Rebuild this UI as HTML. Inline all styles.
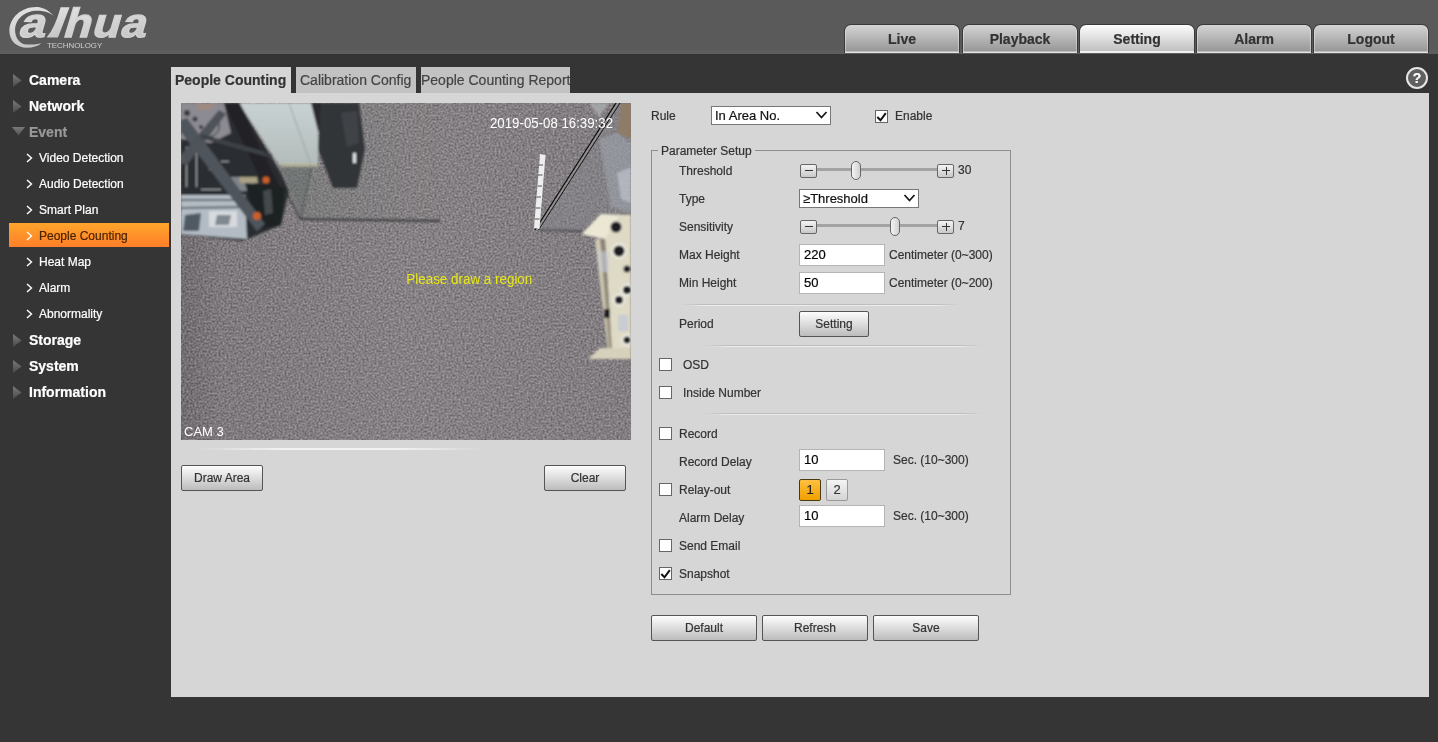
<!DOCTYPE html>
<html><head><meta charset="utf-8">
<style>
*{margin:0;padding:0;box-sizing:border-box}
div{-webkit-text-stroke-width:0.2px}
html,body{width:1438px;height:742px;overflow:hidden;background:#353535;font-family:"Liberation Sans",sans-serif;color:#333}
.a{position:absolute;white-space:nowrap}
#hdr{position:absolute;left:0;top:0;width:1438px;height:54px;background:#5a5a5a}
#hdr .strip{position:absolute;left:0;top:50px;width:1438px;height:4px;background:#5e5e5e}
.nav{position:absolute;top:24px;height:29px;width:116px;border:1px solid #3a3a3a;border-bottom:none;border-radius:7px 7px 0 0;background:linear-gradient(#d4d4d4,#939393);font-weight:bold;font-size:14px;color:#333;text-align:center;line-height:29px;box-shadow:inset 0 -1.5px 0 #e2e2e2,inset 1px 0 0 rgba(255,255,255,.35),inset -1px 0 0 rgba(255,255,255,.35)}
.nav.on{background:linear-gradient(#fdfdfd,#bcbcbc);box-shadow:inset 0 -2px 0 #f0f0f0}
.side1{position:absolute;left:29px;font-size:14px;font-weight:bold;color:#fff;line-height:16px}
.tri{position:absolute;left:12px;width:11px;height:15px}
.tridn{position:absolute;left:11px;width:15px;height:11px}
.side2{position:absolute;left:39px;font-size:12px;color:#fff;line-height:14px}
.chev{position:absolute;left:26px;width:7px;height:10px}
#panel{position:absolute;left:171px;top:93px;width:1258px;height:604px;background:#d6d6d6}
.ctab{position:absolute;white-space:nowrap;top:67px;height:26px;font-size:14px;line-height:16px;padding-top:5px;color:#444;background:#c2c2c2;overflow:hidden}
.ctab.on{background:#d6d6d6;font-weight:bold;color:#333}
.lbl{position:absolute;font-size:12px;color:#333;line-height:14px;white-space:nowrap}
.inp{position:absolute;left:799px;width:86px;height:22px;background:#fff;border:1px solid #b5b5b5;font-size:13px;color:#000;line-height:15px;padding:2px 0 0 4px}
.sel{position:absolute;height:19px;background:#fff;border:1px solid #777;font-size:13px;color:#111;line-height:15px;padding:1px 0 0 3px}
.btn{position:absolute;height:26px;border:1px solid #555;border-radius:2px;background:linear-gradient(#fdfdfd,#bcbcbc);font-size:12px;color:#333;text-align:center;line-height:25px}
.cb{position:absolute;left:659px;width:13px;height:13px;background:#fff;border:1px solid #666}
.sep{position:absolute;height:2px;background:linear-gradient(90deg,rgba(190,190,190,0),#bdbdbd 8%,#bdbdbd 92%,rgba(190,190,190,0))}
.sep:after{content:"";position:absolute;left:0;top:1px;width:100%;height:1px;background:linear-gradient(90deg,rgba(240,240,240,0),#ececec 8%,#ececec 92%,rgba(240,240,240,0))}
.sb{position:absolute;width:17px;height:14px;border:1px solid #666;border-radius:2px;background:linear-gradient(#f4f4f4,#c8c8c8)}
.mi{position:absolute;left:4px;top:5px;width:8px;height:1px;background:#333}
.pl{position:absolute;left:7.5px;top:1.5px;width:1px;height:8px;background:#333}
.track{position:absolute;height:3px;background:#a3a3a3}
.thumb{position:absolute;width:10px;height:19px;border:1px solid #666;border-radius:5px;background:linear-gradient(90deg,#f4f4f4,#d0d0d0)}
</style></head><body><div id="root" style="position:absolute;left:0;top:0;width:1438px;height:742px;will-change:transform">
<svg width="0" height="0" style="position:absolute"><defs><linearGradient id="tg" x1="0" y1="0" x2="0" y2="1"><stop offset="0" stop-color="#7a7a7a"/><stop offset="1" stop-color="#4a4a4a"/></linearGradient><linearGradient id="tg2" x1="0" y1="0" x2="0" y2="1"><stop offset="0" stop-color="#7a7a7a"/><stop offset="1" stop-color="#505050"/></linearGradient></defs></svg>
<div id="hdr"><div class="strip"></div></div>

<!-- logo -->
<svg class="a" style="left:0;top:0;will-change:transform" width="170" height="54" viewBox="0 0 170 54">
<defs><linearGradient id="lg" x1="0" y1="0" x2="0.3" y2="1"><stop offset="0" stop-color="#e6e6e6"/><stop offset="1" stop-color="#c6c6c6"/></linearGradient></defs>
<g fill="url(#lg)">
<path d="M54.2,16.2 C48,9.5 42,7 36,7 C21,7 9.4,18 9.4,31 C9.4,41 17,47.8 27,47.8 C33,47.8 38,46 41.4,43.2 C36,44.6 31,44.6 27,44.6 C20,44.6 15.1,38 15.1,30.3 C15.1,19 25,10.8 37.3,10.8 C45,10.8 50,13 54.2,16.2 Z"/>
<text transform="translate(17.5,37.4) skewX(-16.3) scale(1.14,1)" font-family="Liberation Sans" font-weight="bold" font-size="41" stroke="#d6d6d6" stroke-width="1.2">a</text>
<path d="M60.6 7.2 L69.6 7.2 L58 37.6 L46.5 37.6 Q55 28 60.6 7.2 Z"/>
<text transform="translate(61.8,37.4) skewX(-16.3) scale(1.1,1)" font-family="Liberation Sans" font-weight="bold" font-size="41" stroke="#d2d2d2" stroke-width="1.3" letter-spacing="1">hua</text>
<text x="47" y="48" font-family="Liberation Sans" font-size="7.9" fill="#d0d0d0">TECHNOLOGY</text>
</g>
</svg>

<div class="nav" style="left:844px">Live</div>
<div class="nav" style="left:962px">Playback</div>
<div class="nav on" style="left:1079px">Setting</div>
<div class="nav" style="left:1196px">Alarm</div>
<div class="nav" style="left:1313px">Logout</div>

<!-- sidebar -->
<svg class="tri" style="top:73px" viewBox="0 0 11 15"><defs></defs><polygon points="1,1 9.5,7.5 1,14" fill="url(#tg)"/></svg><div class="side1" style="top:72px">Camera</div>
<svg class="tri" style="top:99px" viewBox="0 0 11 15"><defs></defs><polygon points="1,1 9.5,7.5 1,14" fill="url(#tg)"/></svg><div class="side1" style="top:98px">Network</div>
<svg class="tridn" style="top:126px" viewBox="0 0 15 11"><polygon points="1,1 14,1 7.5,9.5" fill="url(#tg2)"/></svg><div class="side1" style="top:124px;color:#999">Event</div>

<div class="a" style="left:9px;top:223px;width:160px;height:24px;background:linear-gradient(#ffa52a,#ff7f2a)"></div>
<svg class="chev" style="top:153px" viewBox="0 0 7 10"><polyline points="1,1 5.5,5 1,9" fill="none" stroke="#fff" stroke-width="1.4"/></svg><div class="side2" style="top:151px">Video Detection</div>
<svg class="chev" style="top:179px" viewBox="0 0 7 10"><polyline points="1,1 5.5,5 1,9" fill="none" stroke="#fff" stroke-width="1.4"/></svg><div class="side2" style="top:177px">Audio Detection</div>
<svg class="chev" style="top:205px" viewBox="0 0 7 10"><polyline points="1,1 5.5,5 1,9" fill="none" stroke="#fff" stroke-width="1.4"/></svg><div class="side2" style="top:203px">Smart Plan</div>
<svg class="chev" style="top:231px" viewBox="0 0 7 10"><polyline points="1,1 5.5,5 1,9" fill="none" stroke="#fff" stroke-width="1.4"/></svg><div class="side2" style="top:229px;color:#4a2400">People Counting</div>
<svg class="chev" style="top:257px" viewBox="0 0 7 10"><polyline points="1,1 5.5,5 1,9" fill="none" stroke="#fff" stroke-width="1.4"/></svg><div class="side2" style="top:255px">Heat Map</div>
<svg class="chev" style="top:283px" viewBox="0 0 7 10"><polyline points="1,1 5.5,5 1,9" fill="none" stroke="#fff" stroke-width="1.4"/></svg><div class="side2" style="top:281px">Alarm</div>
<svg class="chev" style="top:309px" viewBox="0 0 7 10"><polyline points="1,1 5.5,5 1,9" fill="none" stroke="#fff" stroke-width="1.4"/></svg><div class="side2" style="top:307px">Abnormality</div>

<svg class="tri" style="top:333px" viewBox="0 0 11 15"><defs></defs><polygon points="1,1 9.5,7.5 1,14" fill="url(#tg)"/></svg><div class="side1" style="top:332px">Storage</div>
<svg class="tri" style="top:359px" viewBox="0 0 11 15"><defs></defs><polygon points="1,1 9.5,7.5 1,14" fill="url(#tg)"/></svg><div class="side1" style="top:358px">System</div>
<svg class="tri" style="top:385px" viewBox="0 0 11 15"><defs></defs><polygon points="1,1 9.5,7.5 1,14" fill="url(#tg)"/></svg><div class="side1" style="top:384px">Information</div>

<!-- panel -->
<div id="panel"></div>
<div class="ctab on" style="left:171px;width:120px;padding-left:4px">People Counting</div>
<div class="ctab" style="left:296px;width:120px;padding-left:4px">Calibration Config</div>
<div class="ctab" style="left:421px;width:149px;padding-left:0">People Counting Report</div>

<!-- camera -->
<svg class="a" style="left:181px;top:103px" width="450" height="337" viewBox="0 0 450 337">
<defs>
<filter id="nz" x="0" y="0" width="100%" height="100%" color-interpolation-filters="sRGB"><feTurbulence type="fractalNoise" baseFrequency="0.5" numOctaves="2" seed="5" result="t"/><feColorMatrix in="t" type="matrix" values="1 0 0 0 0  1 0 0 0 0  1 0 0 0 0  0 0 0 0 1" result="g"/><feComposite in="SourceGraphic" in2="g" operator="arithmetic" k1="0" k2="1" k3="0.38" k4="-0.19"/></filter>
<filter id="bl"><feGaussianBlur stdDeviation="0.8"/></filter>
<filter id="bl2"><feGaussianBlur stdDeviation="2"/></filter>
<linearGradient id="cg" x1="0" y1="0" x2="1" y2="0"><stop offset="0" stop-color="#716d70"/><stop offset="0.09" stop-color="#7e7a7d"/><stop offset="0.5" stop-color="#868184"/><stop offset="1" stop-color="#827d80"/></linearGradient>
<linearGradient id="gt" x1="0" y1="0" x2="1" y2="0"><stop offset="0" stop-color="#6f7a74" stop-opacity="0.35"/><stop offset="0.5" stop-color="#74807a" stop-opacity="0.15"/><stop offset="1" stop-color="#74807a" stop-opacity="0"/></linearGradient>
<linearGradient id="gl" x1="0" y1="0" x2="0" y2="1"><stop offset="0" stop-color="#c9d2d2"/><stop offset="1" stop-color="#b3bcbb"/></linearGradient>
</defs>
<rect width="450" height="337" fill="url(#cg)" filter="url(#nz)"/>
<g filter="url(#bl)">
<!-- glass-through floor tint -->
<polygon points="98,62 137,62 151,85 174,85 183,46 183,0 259,0 259,117 119,116" fill="url(#gt)"/>
<polygon points="100,64 131,64 121,114" fill="#5f6966" opacity="0.35"/>
<line x1="131" y1="62" x2="120" y2="115" stroke="#3c4240" stroke-width="0.8"/>
<!-- rack base -->
<polygon points="0,0 58,0 100,70 108,88 100,122 62,138 0,131" fill="#2c2e32"/>
<polygon points="0,0 43,0 50,30 30,40 0,36" fill="#8c8a92"/>
<polygon points="14,0 34,0 32,6 18,8" fill="#9d8a82"/>
<g fill="#2a2b30" opacity="0.85"><circle cx="6" cy="10" r="3"/><circle cx="14" cy="16" r="2.5"/><circle cx="20" cy="24" r="2"/><circle cx="4" cy="22" r="2"/><circle cx="26" cy="32" r="1.8"/><circle cx="10" cy="30" r="1.8"/></g>
<path d="M34,12 C40,20 40,28 32,33 L22,35" stroke="#1f2023" stroke-width="1" fill="none"/>
<polygon points="43,0 57,0 103,92 89,96" fill="#222428"/>
<g fill="#d0d4d8" opacity="0.75"><rect x="5" y="44" width="1" height="40"/><rect x="15" y="50" width="1" height="34"/><rect x="28" y="66" width="12" height="1"/><rect x="40" y="58" width="8" height="1"/><rect x="45" y="72" width="1" height="14"/><rect x="20" y="86" width="20" height="1"/></g>
<polygon points="50,74 72,74 74,88 52,88" fill="#7f8489"/>
<polygon points="58,74 76,74 77,80 59,80" fill="#a9a184"/>
<polygon points="0,92 64,92 66,136 0,131" fill="#b3bcc4"/>
<polygon points="0,96 60,96 60,98 0,98" fill="#5f666e"/>
<polygon points="0,104 62,103 62,105 0,106" fill="#5f666e"/>
<polygon points="28,108 56,108 56,124 28,124" fill="#d6dade"/>
<polygon points="4,112 20,110 18,128 2,128" fill="#4f5a64"/>
<polygon points="36,112 50,112 48,122 34,122" fill="#6c747c" opacity="0.8"/>
<polygon points="64,80 104,84 100,122 76,126" fill="#1e2023"/>
<polygon points="82,88 90,86 92,110 84,112" fill="#44484c"/>
<!-- beams -->
<polygon points="0,17 6,15 84,121 76,128 0,29" fill="#50555c"/>
<polygon points="38,7 45,11 6,62 0,60 0,52" fill="#4e5258"/>
<polygon points="20,31 92,51 91,55 19,35" fill="#3e4247"/>
<circle cx="85" cy="77" r="3.5" fill="#c8602c"/>
<circle cx="76" cy="113" r="4" fill="#c8602c"/>
<!-- glass bright -->
<polygon points="58,0 130,0 137,0 137,46 137,62 98,62" fill="url(#gl)"/>
<line x1="108" y1="0" x2="130" y2="62" stroke="#8e9898" stroke-width="0.8"/>
<line x1="58" y1="0" x2="119" y2="115" stroke="#2a2c2e" stroke-width="1.2"/>
<polygon points="98,60 137,60 137,64 100,64" fill="#b8b89a" opacity="0.7"/>
<!-- pole & suitcase -->
<polygon points="130,0 147,0 147,28 137,28" fill="#2a2c2f"/>
<polygon points="140,0 178,0 184,46 176,85 152,85 137,46" fill="#323539"/>
<polygon points="160,10 176,8 178,40 166,44" fill="#3f4347"/>
<rect x="172" y="50" width="3" height="10" fill="#dfe3e6"/>
<!-- floor lines -->
<polygon points="119,115 259,117 259,119 119,117" fill="#3a3a3c"/>
<polygon points="358,126 402,127 402,129 358,128" fill="#3a3a3c"/>
<!-- right glass region -->
<polygon points="438,0 450,0 450,110 418,110 400,128 356,128" fill="#868a8e" opacity="0.35"/>
<polygon points="418,36 436,30 450,40 450,110 430,104 424,70" fill="#9ea5ae" opacity="0.55"/>
<polygon points="436,70 450,64 450,100 440,96" fill="#c4cad6" opacity="0.6"/>
<polygon points="408,0 428,0 418,14" fill="#aeb3b3" opacity="0.7"/>
<polygon points="440,0 450,0 450,36 436,30" fill="#8e7c69"/>
<!-- beige device -->
<polygon points="401,131 420,111 450,112 450,249 431,249 424,136" fill="#dedac6"/>
<polygon points="401,131 420,111 438,113 424,136" fill="#ebe7d4"/>
<polygon points="414,137 419,135 432,247 427,249" fill="#cfc9b2"/>
<polygon points="419,135 424,136 431,247 428,248" fill="#8e8674" opacity="0.8"/>
<polygon points="407,256 419,245 450,245 450,256" fill="#d6d1bb"/>
<g fill="#1d1f22"><circle cx="435" cy="124" r="5.5"/><circle cx="438" cy="148" r="5.5"/><circle cx="446" cy="166" r="3.5"/><circle cx="446" cy="187" r="4"/><circle cx="438" cy="197" r="4"/><circle cx="446" cy="237" r="3.5"/><rect x="423" y="206" width="6" height="9"/></g>
<g fill="none" stroke="#f4f4f0" stroke-width="1.3"><circle cx="438" cy="148" r="7"/><circle cx="446" cy="187" r="5.5"/><circle cx="438" cy="197" r="5.5"/><circle cx="446" cy="237" r="5"/></g>
<rect x="437" y="212" width="10" height="16" fill="#c9ccd0"/>
<polygon points="416,146 428,150 428,170 418,168" fill="#c8ccd8" opacity="0.6"/>
</g>
<g>
<line x1="435" y1="0" x2="354" y2="127" stroke="#0c0c0c" stroke-width="1.2"/>
<line x1="439" y1="0" x2="357.5" y2="127" stroke="#151515" stroke-width="1"/>
<line x1="437" y1="0" x2="356" y2="127" stroke="#9a9a9a" stroke-width="1.2" opacity="0.8"/>
<polygon points="359,51 364.5,52 358.5,126 353,125" fill="#eeeeee"/>
<g stroke="#555" stroke-width="1"><line x1="357.5" y1="62" x2="362" y2="62"/><line x1="357" y1="72" x2="361.5" y2="72"/><line x1="356.5" y1="83" x2="361" y2="83"/><line x1="355.5" y1="94" x2="360" y2="94"/><line x1="355" y1="105" x2="359.5" y2="105"/><line x1="354" y1="116" x2="358.5" y2="116"/></g>
</g>
<text x="309" y="25" font-family="Liberation Sans" font-size="14" fill="#fff" textLength="123" lengthAdjust="spacingAndGlyphs">2019-05-08 16:39:32</text>
<text x="225.3" y="181" font-family="Liberation Sans" font-size="14" fill="#e8e818" textLength="126" lengthAdjust="spacingAndGlyphs">Please draw a region</text>
<text x="3" y="333" font-family="Liberation Sans" font-size="13" fill="#fff">CAM 3</text>
</svg>

<div class="a" style="left:195px;top:448px;width:290px;height:2px;background:linear-gradient(90deg,rgba(240,240,240,0),#f2f2f2 30%,#f2f2f2 70%,rgba(240,240,240,0))"></div>
<div class="btn" style="left:181px;top:465px;width:82px">Draw Area</div>
<div class="btn" style="left:544px;top:465px;width:82px">Clear</div>

<!-- right column -->
<div class="lbl" style="left:651px;top:109px">Rule</div>
<div class="sel" style="left:711px;top:106px;width:120px">In Area No.</div><svg class="a" style="left:814.5px;top:110px" width="14" height="10" viewBox="0 0 14 10"><polyline points="1.5,2 6.5,7.5 11.5,2" fill="none" stroke="#1a1a1a" stroke-width="1.8"/></svg>
<div class="cb" style="left:875px;top:110px"></div><svg class="a" style="left:875px;top:110px" width="13" height="13" viewBox="0 0 13 13"><polyline points="2.3,7 5.5,10.3 10.8,3.2" fill="none" stroke="#111" stroke-width="2"/></svg>
<div class="lbl" style="left:895px;top:109px">Enable</div>


<!-- fieldset -->
<div class="a" style="left:651px;top:150px;width:360px;height:445px;border:1px solid #8e8e8e"></div>
<div class="lbl" style="left:658px;top:144px;background:#d6d6d6;padding:0 3px">Parameter Setup</div>

<div class="lbl" style="left:679px;top:164px">Threshold</div>
<div class="sb" style="left:800px;top:164px"><div class="mi"></div></div>
<div class="track" style="left:817px;top:168px;width:120px"></div>
<div class="thumb" style="left:851px;top:161px"></div>
<div class="sb" style="left:937px;top:164px"><div class="mi"></div><div class="pl"></div></div>
<div class="lbl" style="left:958px;top:163px">30</div>

<div class="lbl" style="left:679px;top:192px">Type</div>
<div class="sel" style="left:799px;top:189px;width:120px">&ge;Threshold</div><svg class="a" style="left:902.5px;top:193px" width="14" height="10" viewBox="0 0 14 10"><polyline points="1.5,2 6.5,7.5 11.5,2" fill="none" stroke="#1a1a1a" stroke-width="1.8"/></svg>

<div class="lbl" style="left:679px;top:220px">Sensitivity</div>
<div class="sb" style="left:800px;top:220px"><div class="mi"></div></div>
<div class="track" style="left:817px;top:224px;width:120px"></div>
<div class="thumb" style="left:890px;top:217px"></div>
<div class="sb" style="left:937px;top:220px"><div class="mi"></div><div class="pl"></div></div>
<div class="lbl" style="left:958px;top:219px">7</div>

<div class="lbl" style="left:679px;top:248px">Max Height</div>
<div class="inp" style="top:244px">220</div>
<div class="lbl" style="left:889px;top:248px">Centimeter (0~300)</div>
<div class="lbl" style="left:679px;top:276px">Min Height</div>
<div class="inp" style="top:272px">50</div>
<div class="lbl" style="left:889px;top:276px">Centimeter (0~200)</div>

<div class="sep" style="left:680px;top:304px;width:280px"></div>
<div class="lbl" style="left:679px;top:317px">Period</div>
<div class="btn" style="left:799px;top:311px;width:70px">Setting</div>
<div class="sep" style="left:703px;top:345px;width:280px"></div>

<div class="cb" style="top:358px"></div><div class="lbl" style="left:683px;top:358px">OSD</div>
<div class="cb" style="top:386px"></div><div class="lbl" style="left:683px;top:386px">Inside Number</div>
<div class="sep" style="left:703px;top:413px;width:280px"></div>

<div class="cb" style="top:427px"></div><div class="lbl" style="left:679px;top:427px">Record</div>
<div class="lbl" style="left:679px;top:455px">Record Delay</div>
<div class="inp" style="top:449px">10</div>
<div class="lbl" style="left:893px;top:453px">Sec. (10~300)</div>
<div class="cb" style="top:483px"></div><div class="lbl" style="left:679px;top:483px">Relay-out</div>
<div class="a" style="left:799px;top:479px;width:22px;height:22px;border:1px solid #4a3a10;border-radius:2px;background:linear-gradient(#ffc040,#f0a000);font-size:13px;color:#222;text-align:center;line-height:19px">1</div>
<div class="a" style="left:826px;top:479px;width:22px;height:22px;border:1px solid #999;border-radius:2px;background:linear-gradient(#f4f4f4,#d4d4d4);font-size:13px;color:#333;text-align:center;line-height:19px">2</div>
<div class="lbl" style="left:679px;top:511px">Alarm Delay</div>
<div class="inp" style="top:505px">10</div>
<div class="lbl" style="left:893px;top:509px">Sec. (10~300)</div>
<div class="cb" style="top:539px"></div><div class="lbl" style="left:679px;top:539px">Send Email</div>
<div class="cb" style="top:567px"></div><svg class="a" style="left:659px;top:567px" width="13" height="13" viewBox="0 0 13 13"><polyline points="2.3,7 5.5,10.3 10.8,3.2" fill="none" stroke="#111" stroke-width="2"/></svg><div class="lbl" style="left:679px;top:567px">Snapshot</div>

<div class="btn" style="left:651px;top:615px;width:106px">Default</div>
<div class="btn" style="left:762px;top:615px;width:106px">Refresh</div>
<div class="btn" style="left:873px;top:615px;width:106px">Save</div>

<!-- help -->
<div class="a" style="left:1406px;top:67px;width:22px;height:22px;border:2px solid #e6e6e6;border-radius:50%;background:#606060;color:#fff;font-weight:bold;font-size:14px;text-align:center;line-height:18px">?</div>
</div></body></html>
